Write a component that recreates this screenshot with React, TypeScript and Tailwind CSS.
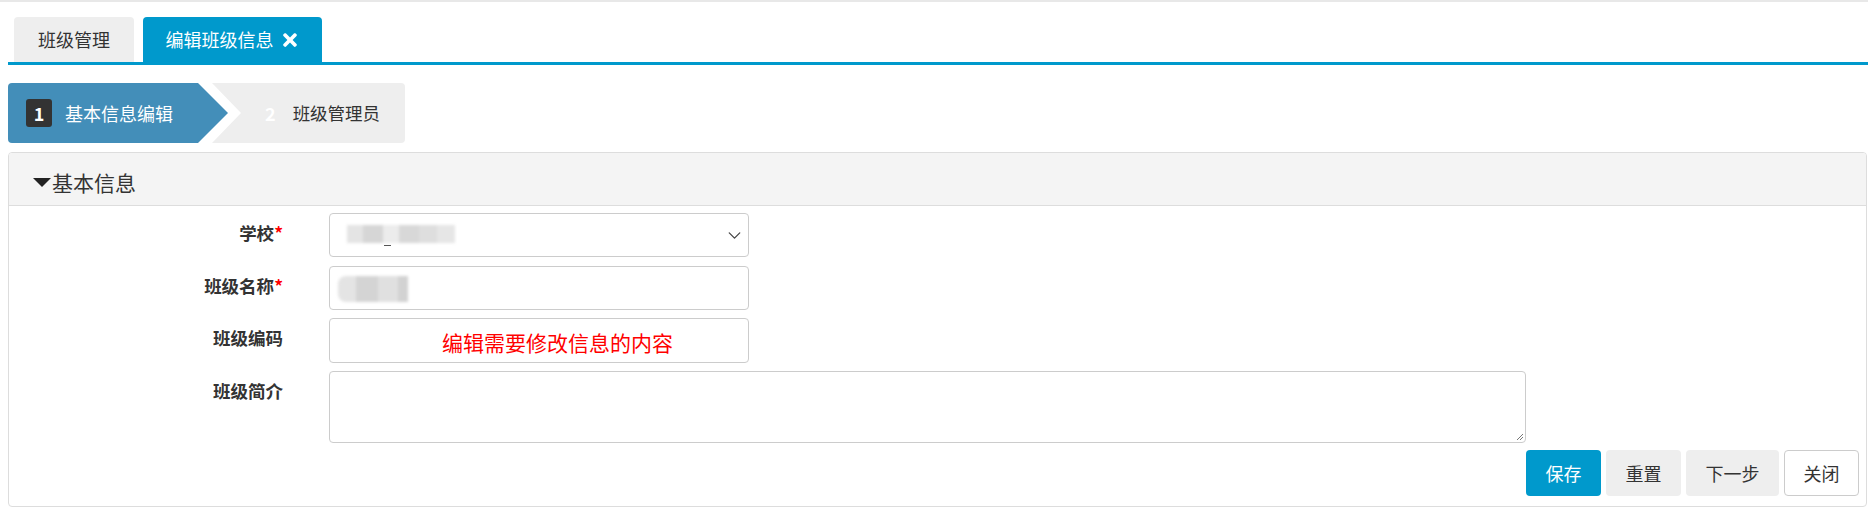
import React from "react";
import { ChevronDown } from "lucide-react";
import { FaTimes } from "react-icons/fa";

const font = "font-['Microsoft_YaHei','Noto_Sans_CJK_SC',sans-serif]";

function Label({ text, req }: { text: string; req?: boolean }) {
  return (
    <div className="w-[274px] shrink-0 text-right pt-[9px] leading-[22px] text-[17.5px] font-bold text-[#333]">
      {text}
      {req && <span className="text-[#f00]">*</span>}
    </div>
  );
}

export default function App() {
  return (
    <div className={`w-[1874px] h-[513px] bg-white ${font} overflow-hidden`}>
      <div className="h-[2px] w-[1868px] bg-[#e8e8e8]" />
      <div className="pl-[8px] w-[1868px]">
        {/* tabs */}
        <div className="flex gap-[9px] pl-[6px] pt-[15px] border-b-[3px] border-[#0099cc]">
          <div className="w-[120px] h-[45px] bg-[#eee] rounded-t-[4px] flex items-center justify-center text-[18px] text-[#333]">
            班级管理
          </div>
          <div className="w-[179px] h-[45px] bg-[#0099cc] rounded-t-[4px] flex items-center justify-center gap-[6px] text-[18px] text-white">
            <span>编辑班级信息</span>
            <FaTimes className="text-white" size={20} />
          </div>
        </div>

        {/* steps */}
        <div className="mt-[18px] flex h-[60px]">
          <div className="w-[220px] h-[60px] bg-[#438eb9] rounded-l-[4px] [clip-path:polygon(0_0,190px_0,220px_30px,190px_60px,0_60px)] flex items-center pl-[18px] relative z-10">
            <div className="w-[26px] h-[28px] bg-[#333] rounded-[3px] flex items-center justify-center text-white font-bold text-[18px]">
              1
            </div>
            <span className="ml-[13px] text-white text-[18px]">基本信息编辑</span>
          </div>
          <div className="-ml-[16px] w-[193px] h-[60px] bg-[#eee] rounded-r-[4px] [clip-path:polygon(0_0,193px_0,193px_60px,0_60px,29px_30px)] flex items-center pl-[53px]">
            <span className="text-white font-bold text-[18px]">2</span>
            <span className="ml-[17px] text-[#333] text-[17.5px]">班级管理员</span>
          </div>
        </div>

        {/* panel */}
        <div className="mt-[9px] w-[1859px] h-[355px] border border-[#ddd] rounded-[4px] overflow-hidden flex flex-col">
          <div className="h-[53px] shrink-0 bg-[#f4f4f4] border-b border-[#ddd] flex items-center pl-[24px] pt-[7px]">
            <div className="w-0 h-0 border-l-[9px] border-r-[9px] border-t-[9px] border-l-transparent border-r-transparent border-t-[#222] mr-[1px]" />
            <span className="text-[21px] text-[#333] leading-none">基本信息</span>
          </div>
          <div className="flex-1 flex flex-col pt-[7px] pr-[7px]">
            {/* school */}
            <div className="flex">
              <Label text="学校" req />
              <div className="ml-[46px] w-[420px] h-[44px] border border-[#ccc] rounded-[4px] bg-white flex items-center justify-between pl-[17px] pr-[3px] relative">
                <div className="flex items-center blur-[1.5px] -mt-[2px]">
                  <div className="w-[16px] h-[18px] bg-[#e4e4e4]" />
                  <div className="w-[20px] h-[18px] bg-[#d6d6d6]" />
                  <div className="w-[16px] h-[18px] bg-[#ececec]" />
                  <div className="w-[20px] h-[18px] bg-[#d8d8d8]" />
                  <div className="w-[18px] h-[18px] bg-[#dedede]" />
                  <div className="w-[18px] h-[18px] bg-[#e6e6e6]" />
                </div>
                <div className="absolute left-[54px] top-[31px] w-[7px] h-[1px] bg-[#555]" />
                <ChevronDown size={21} strokeWidth={1.5} className="text-[#444]" />
              </div>
            </div>
            {/* name */}
            <div className="flex mt-[9px]">
              <Label text="班级名称" req />
              <div className="ml-[46px] w-[420px] h-[44px] border border-[#ccc] rounded-[4px] bg-white flex items-center pl-[8px]">
                <div className="flex blur-[1.5px] mt-[2px]">
                  <div className="w-[18px] h-[26px] bg-[#e4e4e4] rounded-l-[8px]" />
                  <div className="w-[22px] h-[26px] bg-[#d4d4d4]" />
                  <div className="w-[20px] h-[26px] bg-[#e0e0e0]" />
                  <div className="w-[10px] h-[26px] bg-[#d2d2d2]" />
                </div>
              </div>
            </div>
            {/* code */}
            <div className="flex mt-[8px]">
              <Label text="班级编码" />
              <div className="ml-[46px] w-[420px] h-[45px] border border-[#ccc] rounded-[4px] bg-white flex items-center pl-[112px] pt-[4px]">
                <span className="text-[21px] leading-none text-[#f00]">编辑需要修改信息的内容</span>
              </div>
            </div>
            {/* intro */}
            <div className="flex mt-[8px]">
              <Label text="班级简介" />
              <div className="ml-[46px] w-[1197px] h-[72px] border border-[#ccc] rounded-[4px] bg-white relative">
                <svg className="absolute right-[1px] bottom-[1px]" width="9" height="9" viewBox="0 0 9 9">
                  <path d="M8 2 L2 8 M8 5 L5 8" stroke="#777" strokeWidth="1" />
                </svg>
              </div>
            </div>
            {/* buttons */}
            <div className="flex justify-end gap-[5px] mt-[7px]">
              <div className="w-[75px] h-[46px] rounded-[4px] bg-[#0099cc] text-white text-[18px] flex items-center justify-center">
                保存
              </div>
              <div className="w-[75px] h-[46px] rounded-[4px] bg-[#eee] text-[#333] text-[18px] flex items-center justify-center">
                重置
              </div>
              <div className="w-[93px] h-[46px] rounded-[4px] bg-[#eee] text-[#333] text-[18px] flex items-center justify-center">
                下一步
              </div>
              <div className="w-[75px] h-[46px] rounded-[4px] bg-white border border-[#ccc] text-[#333] text-[18px] flex items-center justify-center">
                关闭
              </div>
            </div>
          </div>
        </div>
      </div>
    </div>
  );
}
